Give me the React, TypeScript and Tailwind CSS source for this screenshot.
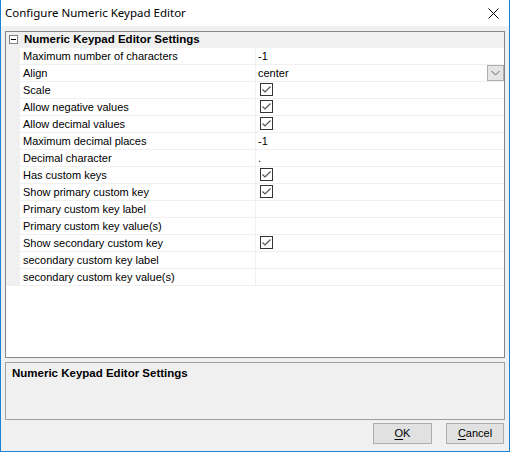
import React from 'react';

type Row = { label: string; value?: string; check?: boolean; combo?: boolean };

const rows: Row[] = [
  { label: 'Maximum number of characters', value: '-1' },
  { label: 'Align', value: 'center', combo: true },
  { label: 'Scale', check: true },
  { label: 'Allow negative values', check: true },
  { label: 'Allow decimal values', check: true },
  { label: 'Maximum decimal places', value: '-1' },
  { label: 'Decimal character', value: '.' },
  { label: 'Has custom keys', check: true },
  { label: 'Show primary custom key', check: true },
  { label: 'Primary custom key label' },
  { label: 'Primary custom key value(s)' },
  { label: 'Show secondary custom key', check: true },
  { label: 'secondary custom key label' },
  { label: 'secondary custom key value(s)' },
];

function CheckBox() {
  return (
    <div className="ml-[2px] mt-[1px] w-[13px] h-[13px] border border-[#333333] bg-white flex items-center justify-center">
      <svg width="11" height="11" viewBox="0 0 11 11">
        <path d="M1.5 5.5 L4 8 L9.5 2.5" fill="none" stroke="#555555" strokeWidth="1.2" />
      </svg>
    </div>
  );
}

function ComboButton() {
  return (
    <div className="ml-auto w-[17px] h-[16px] border border-[#adadad] bg-[#e5e5e5] flex items-center justify-center">
      <svg width="9" height="6" viewBox="0 0 9 6">
        <path d="M0.5 1 L4.5 5 L8.5 1" fill="none" stroke="#606060" strokeWidth="1" />
      </svg>
    </div>
  );
}

function Button({ first, rest, className }: { first: string; rest: string; className: string }) {
  return (
    <button
      className={`h-[21px] border border-[#adadad] bg-[#e1e1e1] text-[11px] text-black flex items-center justify-center ${className}`}
    >
      <span>
        <span className="underline underline-offset-2">{first}</span>
        {rest}
      </span>
    </button>
  );
}

export default function App() {
  return (
    <div
      className="w-[510px] h-[452px] flex flex-col bg-[#f0f0f0] border-x border-b border-[#1883d7]"
      style={{ fontFamily: '"Liberation Sans", Arial, sans-serif' }}
    >
      {/* title bar */}
      <div className="h-[26px] bg-white flex items-center pl-[4px] pr-[10px] shrink-0">
        <span className="text-[11.5px] text-black" style={{ fontFamily: '"Noto Sans", "Liberation Sans", sans-serif' }}>
          Configure Numeric Keypad Editor
        </span>
        <svg className="ml-auto" width="11" height="11" viewBox="0 0 11 11">
          <path d="M0.5 0.5 L10.5 10.5 M10.5 0.5 L0.5 10.5" stroke="#000" strokeWidth="1" />
        </svg>
      </div>

      <div className="flex-1 flex flex-col pt-[5px] pl-[4px] pr-[4px]">
        {/* property grid */}
        <div className="h-[327px] border border-[#828790] bg-white flex flex-col shrink-0">
          <div className="h-[16px] bg-[#f0f0f0] flex items-center border-b border-[#f0f0f0]">
            <div className="w-[14px] flex justify-center">
              <div className="w-[9px] h-[9px] border border-[#808080] bg-white flex items-center justify-center">
                <div className="w-[5px] h-px bg-black" />
              </div>
            </div>
            <span className="pl-[4px] text-[11.5px] font-bold text-black">Numeric Keypad Editor Settings</span>
          </div>
          <div className="flex">
            <div className="w-[14px] bg-[#f0f0f0]" />
            <div className="flex-1 flex flex-col">
              {rows.map((r) => (
                <div key={r.label} className="h-[17px] flex border-b border-[#f0f0f0]">
                  <div className="w-[236px] pl-[3px] border-r border-[#f0f0f0] text-[11px] leading-[16px] text-black whitespace-nowrap">
                    {r.label}
                  </div>
                  <div className="flex-1 flex items-start pl-[2px] text-[11px] leading-[16px] text-black">
                    {r.value && <span>{r.value}</span>}
                    {r.check && <CheckBox />}
                    {r.combo && <ComboButton />}
                  </div>
                </div>
              ))}
            </div>
          </div>
        </div>

        {/* description */}
        <div className="mt-[4px] h-[58px] border border-[#a0a0a0] bg-[#f0f0f0] pl-[6px] pt-[3px] text-[11.5px] leading-[14px] shrink-0">
          <span className="font-bold text-black">Numeric Keypad Editor Settings</span>
        </div>

        {/* buttons */}
        <div className="mt-[3px] flex justify-end gap-[14px] pr-[1px]">
          <Button first="O" rest="K" className="w-[59px]" />
          <Button first="C" rest="ancel" className="w-[58px]" />
        </div>
      </div>
    </div>
  );
}
